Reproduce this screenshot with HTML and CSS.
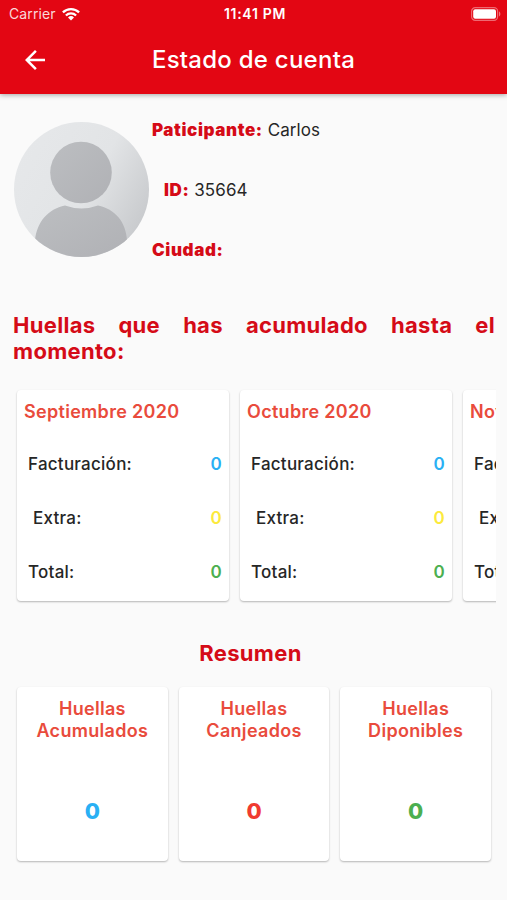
FILE: index.html
```
<!DOCTYPE html>
<html lang="es">
<head>
  <meta charset="UTF-8" />
  <meta name="viewport" content="width=device-width, initial-scale=1" />
  <title>Estado de cuenta</title>
  <link rel="stylesheet" href="styles.css">
</head>
<body>

  <header class="header">
    <!-- Status bar -->
    <div class="status-bar">
      <div class="carrier">
        <span>Carrier</span>
        <svg class="wifi" viewBox="0 0 18 14" width="18" height="14">
          <g fill="none" stroke="#fff" stroke-width="2.3">
            <path d="M0.9 5.4a11.6 11.6 0 0 1 16.2 0" />
            <path d="M3.9 8.5a7.3 7.3 0 0 1 10.2 0" />
          </g>
          <path d="M9 13.6l-3-3.1a4.3 4.3 0 0 1 6 0z" fill="#fff" />
        </svg>
      </div>
      <div class="clock">11:41 PM</div>
      <svg class="battery" viewBox="0 0 30 14" width="30" height="14">
        <rect x="0.6" y="0.7" width="26" height="12.6" rx="3.6" fill="none" stroke="#fff" stroke-opacity="0.4" stroke-width="1.2" />
        <rect x="2.2" y="2.3" width="22.8" height="9.4" rx="2" fill="#fff" />
        <path d="M28 4.6c1.8 0.6 1.8 4.2 0 4.8z" fill="#fff" fill-opacity="0.45" />
      </svg>
    </div>

    <!-- Title bar -->
    <div class="app-bar">
      <svg class="back" viewBox="4 4 16 16" width="20" height="20">
        <path d="M20 11H7.83l5.59-5.59L12 4l-8 8 8 8 1.41-1.41L7.83 13H20v-2z" fill="#fff" />
      </svg>
      <h1>Estado de cuenta</h1>
    </div>
  </header>

  <main>
    <section class="profile">
      <svg class="avatar" viewBox="0 0 135 135" width="135" height="135">
        <defs>
          <linearGradient id="avatar-bg" x1="0" y1="0.2" x2="1" y2="0.75">
            <stop offset="0" stop-color="#e6e8ea" />
            <stop offset="0.55" stop-color="#e2e4e6" />
            <stop offset="1" stop-color="#c6c8cb" />
          </linearGradient>
          <linearGradient id="avatar-fg" x1="0" y1="0" x2="1" y2="1">
            <stop offset="0" stop-color="#bcbec1" />
            <stop offset="1" stop-color="#b0b1b5" />
          </linearGradient>
          <clipPath id="avatar-clip"><circle cx="67.5" cy="67.5" r="67.5" /></clipPath>
        </defs>
        <g clip-path="url(#avatar-clip)">
          <rect width="135" height="135" fill="url(#avatar-bg)" />
          <circle cx="67" cy="50.5" r="30.8" fill="url(#avatar-fg)" />
          <path d="M21 135V118C23 100 34 87 51 83.5Q67.5 89.5 84 83.5C101 87 112 100 113 118V135z" fill="url(#avatar-fg)" />
        </g>
      </svg>
      <div class="info">
        <p><b>Paticipante:</b> Carlos</p>
        <p class="indent"><b>ID:</b> 35664</p>
        <p><b>Ciudad:</b></p>
      </div>
    </section>

    <h2 class="intro">Huellas que has acumulado hasta el momento:</h2>

    <!-- Monthly cards, scroll sideways -->
    <section class="months">
      <div class="card month">
        <h3>Septiembre 2020</h3>
        <div class="row"><span>Facturación:</span><span class="blue">0</span></div>
        <div class="row extra"><span>Extra:</span><span class="yellow">0</span></div>
        <div class="row"><span>Total:</span><span class="green">0</span></div>
      </div>
      <div class="card month">
        <h3>Octubre 2020</h3>
        <div class="row"><span>Facturación:</span><span class="blue">0</span></div>
        <div class="row extra"><span>Extra:</span><span class="yellow">0</span></div>
        <div class="row"><span>Total:</span><span class="green">0</span></div>
      </div>
      <div class="card month">
        <h3>Noviembre 2020</h3>
        <div class="row"><span>Facturación:</span><span class="blue">0</span></div>
        <div class="row extra"><span>Extra:</span><span class="yellow">0</span></div>
        <div class="row"><span>Total:</span><span class="green">0</span></div>
      </div>
    </section>

    <h2 class="resumen">Resumen</h2>

    <section class="summary">
      <div class="card total">
        <h3>Huellas Acumulados</h3>
        <div class="value blue">0</div>
      </div>
      <div class="card total">
        <h3>Huellas Canjeados</h3>
        <div class="value red">0</div>
      </div>
      <div class="card total">
        <h3>Huellas Diponibles</h3>
        <div class="value green">0</div>
      </div>
    </section>
  </main>

</body>
</html>
```
FILE: styles.css
```
* {
  box-sizing: border-box;
}
body {
  font-family: Inter, 'Liberation Sans', sans-serif;
  margin: 0;
  background: #fafafa;
  color: #262626;
  height: 900px;
  overflow: hidden;
}
h1, h2, h3, p {
  margin: 0;
}

/* Header */
.header {
  height: 94px;
  background: #e30613;
  color: #fff;
  box-shadow: 0 1px 5px rgba(0,0,0,0.35);
}
.status-bar {
  display: grid;
  grid-template-columns: 1fr auto 1fr;
  align-items: center;
  height: 27px;
  padding: 0 6px 0 9px;
  font-size: 14px;
}
.carrier {
  display: flex;
  align-items: center;
  gap: 6px;
  color: rgba(255,255,255,0.85);
  letter-spacing: 0.1px;
}
.clock {
  font-size: 14px;
  font-weight: 600;
  letter-spacing: 0.7px;
}
.battery {
  justify-self: end;
}
.app-bar {
  display: grid;
  grid-template-columns: 1fr auto 1fr;
  align-items: center;
  height: 65px;
  padding: 0 25px;
}
.app-bar h1 {
  font-size: 24px;
  font-weight: 500;
  letter-spacing: 0.25px;
}

/* Profile */
.profile {
  display: flex;
  gap: 3px;
  padding: 28px 13px 0 14px;
}
.info {
  display: flex;
  flex-direction: column;
  gap: 40px;
  margin-top: -2px;
  font-size: 17px;
  line-height: 20px;
  letter-spacing: 0.1px;
}
.info b {
  color: #d50b17;
  font-weight: 900;
  letter-spacing: 0.6px;
}
.info .indent {
  padding-left: 12px;
}

h2 {
  color: #d50b17;
  font-size: 22px;
  font-weight: 700;
  line-height: 26px;
  letter-spacing: 0.3px;
}
.intro {
  margin: 52px 12px 0 13px;
  text-align: justify;
}

/* Cards */
.card {
  background: #fff;
  border-radius: 4px;
  box-shadow: 0 1px 2px rgba(0,0,0,0.28);
}
.card h3 {
  color: #e94b3c;
  font-size: 18px;
  font-weight: 600;
  line-height: 22px;
  letter-spacing: 0.3px;
}
.months {
  display: flex;
  gap: 11px;
  margin: 21px 11px 0 12px;
  padding: 5px 5px 6px;
  overflow: hidden;
}
.month {
  flex: 0 0 212px;
  height: 211px;
  padding: 11px 7px;
}
.row {
  display: flex;
  justify-content: space-between;
  padding-left: 4px;
  margin-top: 34px;
  font-size: 17px;
  font-weight: 500;
  line-height: 20px;
  letter-spacing: 0.25px;
}
h3 + .row {
  margin-top: 31px;
}
.extra {
  padding-left: 9px;
}
.row span + span {
  font-weight: 600;
}

.resumen {
  margin-top: 33px;
  padding-right: 6px;
  text-align: center;
}
.summary {
  display: grid;
  grid-template-columns: repeat(3, 1fr);
  gap: 11px;
  padding: 21px 16px 0 17px;
}
.total {
  height: 174px;
  padding: 11px 14px;
  text-align: center;
}
.value {
  margin-top: 56px;
  font-size: 22px;
  font-weight: 800;
  line-height: 26px;
}

.blue {
  color: #29b0f4;
}
.yellow {
  color: #fcea3c;
}
.green {
  color: #4caf50;
}
.red {
  color: #f03b30;
}
```
